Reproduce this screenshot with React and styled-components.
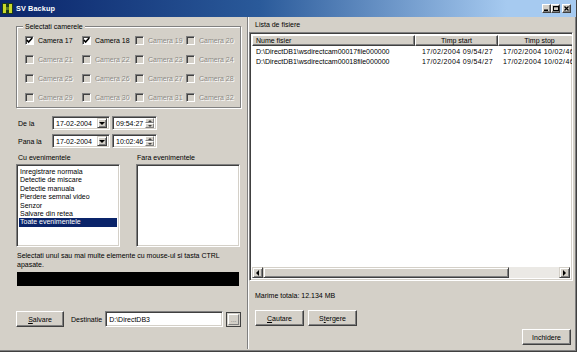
import React from "react";
import styled, { createGlobalStyle } from "styled-components";

const GlobalStyle = createGlobalStyle`
  html, body {
    margin: 0;
    padding: 0;
    background: #d4d0c8;
  }
  body {
    font-family: "Liberation Sans", Arial, sans-serif;
    font-size: 7px;
    color: #000;
  }
`;

const Window = styled.div`
  width: 577px;
  height: 352px;
  box-sizing: border-box;
  display: flex;
  flex-direction: column;
  background: #d4d0c8;
  border-right: 1px solid #404040;
  border-bottom: 1px solid #404040;
  box-shadow: inset -1px -1px #808080;
`;

const TitleBar = styled.div`
  height: 17px;
  flex: none;
  display: flex;
  align-items: center;
  padding: 0 5px 0 2px;
  background: linear-gradient(90deg, #0a246a 0%, #2a5a9a 45%, #a6caf0 88%);
`;

const Title = styled.span`
  flex: 1;
  margin-left: 3px;
  color: #fff;
  font-weight: bold;
  font-size: 7.3px;
  letter-spacing: 0.1px;
`;

const CaptionButton = styled.div`
  width: 9px;
  height: 9px;
  box-sizing: border-box;
  margin-left: ${(p) => (p.$gap ? "2px" : "0")};
  background: #d4d0c8;
  border: 1px solid;
  border-color: #fff #404040 #404040 #fff;
  box-shadow: inset -1px -1px #808080;
  display: flex;
  align-items: center;
  justify-content: center;
`;

const Body = styled.div`
  flex: 1;
  display: flex;
  min-height: 0;
`;

const LeftPane = styled.div`
  width: 247px;
  flex: none;
  box-sizing: border-box;
  padding: 9px 0 0 16px;
  display: flex;
  flex-direction: column;
`;

const Separator = styled.div`
  width: 0;
  flex: none;
  border-left: 1px solid #808080;
  border-right: 1px solid #fff;
  margin-bottom: 2px;
`;

const RightPane = styled.div`
  flex: 1;
  min-width: 0;
  padding-right: 3px;
  display: flex;
  flex-direction: column;
`;

const GroupBox = styled.div`
  position: relative;
  width: 225px;
  height: 82px;
  box-sizing: border-box;
  border: 1px solid #808080;
  box-shadow: inset 1px 1px #fff, 1px 1px #fff;
  padding: 4px 0 0 8px;
  display: grid;
  grid-template-columns: 57px 53px 51px 1fr;
  grid-auto-rows: 19px;
  align-items: center;
`;

const Legend = styled.span`
  position: absolute;
  top: -5px;
  left: 6px;
  padding: 0 2px;
  line-height: 9px;
  background: #d4d0c8;
`;

const CheckItem = styled.label`
  display: flex;
  align-items: center;
  gap: 4px;
  white-space: nowrap;
  color: ${(p) => (p.$disabled ? "#8c8a86" : "#000")};
  text-shadow: ${(p) => (p.$disabled ? "1px 1px #fff" : "none")};
`;

const Box = styled.span`
  width: 9px;
  height: 9px;
  box-sizing: border-box;
  flex: none;
  border: 1px solid;
  border-color: #808080 #fff #fff #808080;
  box-shadow: inset 1px 1px #404040;
  background: ${(p) => (p.$disabled ? "#d4d0c8" : "#fff")};
  display: flex;
  align-items: center;
  justify-content: center;
`;

const DateRow = styled.div`
  display: flex;
  align-items: center;
  height: 14px;
  padding-left: 2px;
  margin-top: ${(p) => p.$mt}px;
`;

const RowLabel = styled.span`
  width: 34px;
`;

const Sunken = styled.div`
  box-sizing: border-box;
  background: #fff;
  border: 1px solid;
  border-color: #808080 #fff #fff #808080;
  box-shadow: inset 1px 1px #404040, inset -1px -1px #d4d0c8;
`;

const Field = styled(Sunken)`
  width: ${(p) => p.$w}px;
  height: ${(p) => p.$h || 14}px;
  margin-left: ${(p) => p.$ml || 0}px;
  display: flex;
  align-items: center;
  padding: 2px 2px 2px 3px;
`;

const FieldText = styled.span`
  flex: 1;
  white-space: nowrap;
  overflow: hidden;
`;

const DropButton = styled.div`
  width: 10px;
  height: 10px;
  box-sizing: border-box;
  background: #d4d0c8;
  border: 1px solid;
  border-color: #d4d0c8 #404040 #404040 #d4d0c8;
  box-shadow: inset 1px 1px #fff, inset -1px -1px #808080;
  display: flex;
  align-items: center;
  justify-content: center;
`;

const Spin = styled.div`
  width: 9px;
  height: 10px;
  display: flex;
  flex-direction: column;
`;

const SpinHalf = styled.div`
  flex: 1;
  box-sizing: border-box;
  background: #d4d0c8;
  border: 1px solid;
  border-color: #fff #808080 #808080 #fff;
  display: flex;
  align-items: center;
  justify-content: center;
`;

const ListsRow = styled.div`
  display: flex;
  gap: 16px;
  margin-top: 5px;
`;

const ListColumn = styled.div`
  width: 104px;
  display: flex;
  flex-direction: column;
`;

const SmallLabel = styled.div`
  line-height: 9px;
  padding-left: ${(p) => p.$pl || 0}px;
  white-space: nowrap;
`;

const ListBox = styled(Sunken)`
  height: 83px;
  margin-top: 2px;
  padding: 3px 2px;
`;

const ListItem = styled.div`
  line-height: 8.4px;
  height: 8.4px;
  padding-left: 1px;
  white-space: nowrap;
  background: ${(p) => (p.$selected ? "#0a246a" : "transparent")};
  color: ${(p) => (p.$selected ? "#fff" : "#000")};
`;

const HelpText = styled.div`
  margin-top: 4px;
  padding-left: 1px;
  line-height: 9px;
`;

const StatusBar = styled.div`
  width: 222px;
  height: 14px;
  margin: 3px 0 0 1px;
  background: #000;
`;

const BottomRow = styled.div`
  display: flex;
  align-items: center;
  margin-top: 25px;
`;

const Button = styled.div`
  width: ${(p) => p.$w || 49}px;
  height: 16px;
  box-sizing: border-box;
  margin-left: ${(p) => p.$ml || 0}px;
  background: #d4d0c8;
  border: 1px solid;
  border-color: #fff #404040 #404040 #fff;
  box-shadow: inset -1px -1px #808080;
  display: flex;
  align-items: center;
  justify-content: center;
  white-space: nowrap;
`;

const Browse = styled.div`
  width: 15px;
  height: 15px;
  box-sizing: border-box;
  margin-left: 3px;
  border: 1px solid #404040;
  display: flex;
  align-items: center;
  justify-content: center;
  background: #d4d0c8;
  color: #808080;
  font-size: 7px;
  line-height: 5px;
`;

const BrowseInner = styled.div`
  width: 11px;
  height: 11px;
  box-sizing: border-box;
  border: 1px solid;
  border-color: #fff #808080 #808080 #fff;
  display: flex;
  align-items: flex-end;
  justify-content: center;
  padding-bottom: 2px;
`;

const DestLabel = styled.span`
  margin: 0 3px 0 7px;
`;

const ListCaption = styled.div`
  margin-top: 3px;
  padding-left: 6px;
  line-height: 9px;
`;

const ListView = styled(Sunken)`
  height: 249px;
  margin-top: 3px;
  padding: 2px;
  display: flex;
  flex-direction: column;
  overflow: hidden;
`;

const HeaderRow = styled.div`
  display: flex;
  height: 11px;
  flex: none;
`;

const HeaderCell = styled.div`
  width: ${(p) => p.$w}px;
  flex: none;
  box-sizing: border-box;
  background: #d4d0c8;
  border: 1px solid;
  border-color: #fff #404040 #404040 #fff;
  box-shadow: inset -1px -1px #808080;
  display: flex;
  align-items: center;
  justify-content: ${(p) => (p.$center ? "center" : "flex-start")};
  padding-left: ${(p) => (p.$center ? 0 : 3)}px;
  white-space: nowrap;
`;

const Rows = styled.div`
  flex: 1;
  padding-top: 1px;
`;

const DataRow = styled.div`
  display: flex;
  height: 9.5px;
  line-height: 9.5px;
  white-space: nowrap;
`;

const Cell = styled.div`
  width: ${(p) => p.$w}px;
  flex: none;
  box-sizing: border-box;
  padding-left: ${(p) => p.$pl}px;
  letter-spacing: ${(p) => (p.$wide ? "0.35px" : "0")};
  overflow: hidden;
`;

const ScrollBar = styled.div`
  height: 11px;
  flex: none;
  display: flex;
  background: #ebe9e5;
`;

const ScrollButton = styled.div`
  width: ${(p) => p.$w || 11}px;
  height: 11px;
  box-sizing: border-box;
  flex: none;
  background: #d4d0c8;
  border: 1px solid;
  border-color: #d4d0c8 #404040 #404040 #d4d0c8;
  box-shadow: inset 1px 1px #fff, inset -1px -1px #808080;
  display: flex;
  align-items: center;
  justify-content: center;
`;

const Track = styled.div`
  flex: 1;
`;

const Total = styled.div`
  margin-top: 10px;
  padding-left: 6px;
  line-height: 9px;
`;

const ButtonRow = styled.div`
  display: flex;
  gap: 4px;
  margin-top: 10px;
  padding-left: 6px;
`;

const CloseRow = styled.div`
  display: flex;
  justify-content: flex-end;
  margin-top: 3px;
  padding-right: 2px;
`;

const Triangle = ({ dir }) => {
  const pts = {
    down: "0,0 6,0 3,3",
    left: "3,0 3,6 0,3",
    right: "0,0 0,6 3,3",
  }[dir];
  const vert = dir === "down";
  return (
    <svg width={vert ? 6 : 3} height={vert ? 3 : 6} viewBox={vert ? "0 0 6 3" : "0 0 3 6"}>
      <polygon points={pts} fill="#000" />
    </svg>
  );
};

const SmallTri = ({ up }) => (
  <svg width="4" height="2" viewBox="0 0 4 2">
    <polygon points={up ? "0,2 4,2 2,0" : "0,0 4,0 2,2"} fill="#404040" />
  </svg>
);

const Check = () => (
  <svg width="7" height="7" viewBox="0 0 7 7">
    <polyline points="0.8,3 2.6,5 6.2,1" fill="none" stroke="#000" strokeWidth="1.6" />
  </svg>
);

const AppIcon = () => (
  <svg width="11" height="11" viewBox="0 0 11 11">
    <rect x="0" y="0" width="11" height="11" fill="#1c3a1c" />
    <rect x="1" y="1" width="3" height="9" fill="#c8d82a" />
    <rect x="7" y="1" width="3" height="9" fill="#c8d82a" />
    <rect x="4" y="4" width="3" height="3" fill="#5a7a20" />
  </svg>
);

const Underlined = ({ text, at }) => (
  <span>
    {text.slice(0, at)}
    <u>{text[at]}</u>
    {text.slice(at + 1)}
  </span>
);

const cameras = Array.from({ length: 16 }, (_, i) => i + 17);

const events = [
  "Inregistrare normala",
  "Detectie de miscare",
  "Detectie manuala",
  "Pierdere semnal video",
  "Senzor",
  "Salvare din retea",
  "Toate evenimentele",
];

const files = [
  ["D:\\DirectDB1\\wsdirectcam00017file000000", "17/02/2004 09/54/27", "17/02/2004 10/02/46"],
  ["D:\\DirectDB1\\wsdirectcam00018file000000", "17/02/2004 09/54/27", "17/02/2004 10/02/46"],
];

const DateField = ({ value }) => (
  <Field $w={58}>
    <FieldText>{value}</FieldText>
    <DropButton>
      <Triangle dir="down" />
    </DropButton>
  </Field>
);

const TimeField = ({ value }) => (
  <Field $w={45} $ml={2}>
    <FieldText>{value}</FieldText>
    <Spin>
      <SpinHalf>
        <SmallTri up />
      </SpinHalf>
      <SpinHalf>
        <SmallTri />
      </SpinHalf>
    </Spin>
  </Field>
);

export default function App() {
  return (
    <>
      <GlobalStyle />
      <Window>
        <TitleBar>
          <AppIcon />
          <Title>SV Backup</Title>
          <CaptionButton>
            <svg width="5" height="5" viewBox="0 0 5 5">
              <rect x="0" y="3.5" width="4" height="1.5" fill="#000" />
            </svg>
          </CaptionButton>
          <CaptionButton>
            <svg width="6" height="5" viewBox="0 0 6 5">
              <rect x="0.5" y="0.5" width="5" height="4" fill="none" stroke="#000" strokeWidth="1" />
              <rect x="0" y="0" width="6" height="1.3" fill="#000" />
            </svg>
          </CaptionButton>
          <CaptionButton $gap>
            <svg width="5" height="5" viewBox="0 0 5 5">
              <path d="M0.5 0.5 L4.5 4.5 M4.5 0.5 L0.5 4.5" stroke="#000" strokeWidth="1.3" />
            </svg>
          </CaptionButton>
        </TitleBar>
        <Body>
          <LeftPane>
            <GroupBox>
              <Legend>Selectati camerele</Legend>
              {cameras.map((n) => {
                const enabled = n === 17 || n === 18;
                return (
                  <CheckItem key={n} $disabled={!enabled}>
                    <Box $disabled={!enabled}>{enabled && <Check />}</Box>
                    Camera {n}
                  </CheckItem>
                );
              })}
            </GroupBox>

            <DateRow $mt={8}>
              <RowLabel>De la</RowLabel>
              <DateField value="17-02-2004" />
              <TimeField value="09:54:27" />
            </DateRow>
            <DateRow $mt={4}>
              <RowLabel>Pana la</RowLabel>
              <DateField value="17-02-2004" />
              <TimeField value="10:02:46" />
            </DateRow>

            <ListsRow>
              <ListColumn>
                <SmallLabel $pl={2}>Cu evenimentele</SmallLabel>
                <ListBox>
                  {events.map((e, i) => (
                    <ListItem key={e} $selected={i === events.length - 1}>
                      {e}
                    </ListItem>
                  ))}
                </ListBox>
              </ListColumn>
              <ListColumn>
                <SmallLabel $pl={1}>Fara evenimentele</SmallLabel>
                <ListBox />
              </ListColumn>
            </ListsRow>

            <HelpText>
              Selectati unul sau mai multe elemente cu mouse-ul si tasta CTRL
              <br />
              apasate.
            </HelpText>
            <StatusBar />

            <BottomRow>
              <Button $w={48}>
                <Underlined text="Salvare" at={0} />
              </Button>
              <DestLabel>Destinatie</DestLabel>
              <Field $w={118} $h={16}>
                <FieldText>D:\DirectDB3</FieldText>
              </Field>
              <Browse>
                <BrowseInner>...</BrowseInner>
              </Browse>
            </BottomRow>
          </LeftPane>

          <Separator />

          <RightPane>
            <ListCaption>Lista de fisiere</ListCaption>
            <ListView>
              <HeaderRow>
                <HeaderCell $w={163}>Nume fisier</HeaderCell>
                <HeaderCell $w={83} $center>
                  Timp start
                </HeaderCell>
                <HeaderCell $w={83} $center>
                  Timp stop
                </HeaderCell>
              </HeaderRow>
              <Rows>
                {files.map((f) => (
                  <DataRow key={f[0]}>
                    <Cell $w={163} $pl={4}>
                      {f[0]}
                    </Cell>
                    <Cell $w={83} $pl={7} $wide>
                      {f[1]}
                    </Cell>
                    <Cell $w={83} $pl={5} $wide>
                      {f[2]}
                    </Cell>
                  </DataRow>
                ))}
              </Rows>
              <ScrollBar>
                <ScrollButton>
                  <Triangle dir="left" />
                </ScrollButton>
                <ScrollButton $w={246} />
                <Track />
                <ScrollButton>
                  <Triangle dir="right" />
                </ScrollButton>
              </ScrollBar>
            </ListView>

            <Total>Marime totala: 12.134 MB</Total>
            <ButtonRow>
              <Button>
                <Underlined text="Cautare" at={0} />
              </Button>
              <Button>
                <Underlined text="Stergere" at={1} />
              </Button>
            </ButtonRow>
            <CloseRow>
              <Button>Inchidere</Button>
            </CloseRow>
          </RightPane>
        </Body>
      </Window>
    </>
  );
}
